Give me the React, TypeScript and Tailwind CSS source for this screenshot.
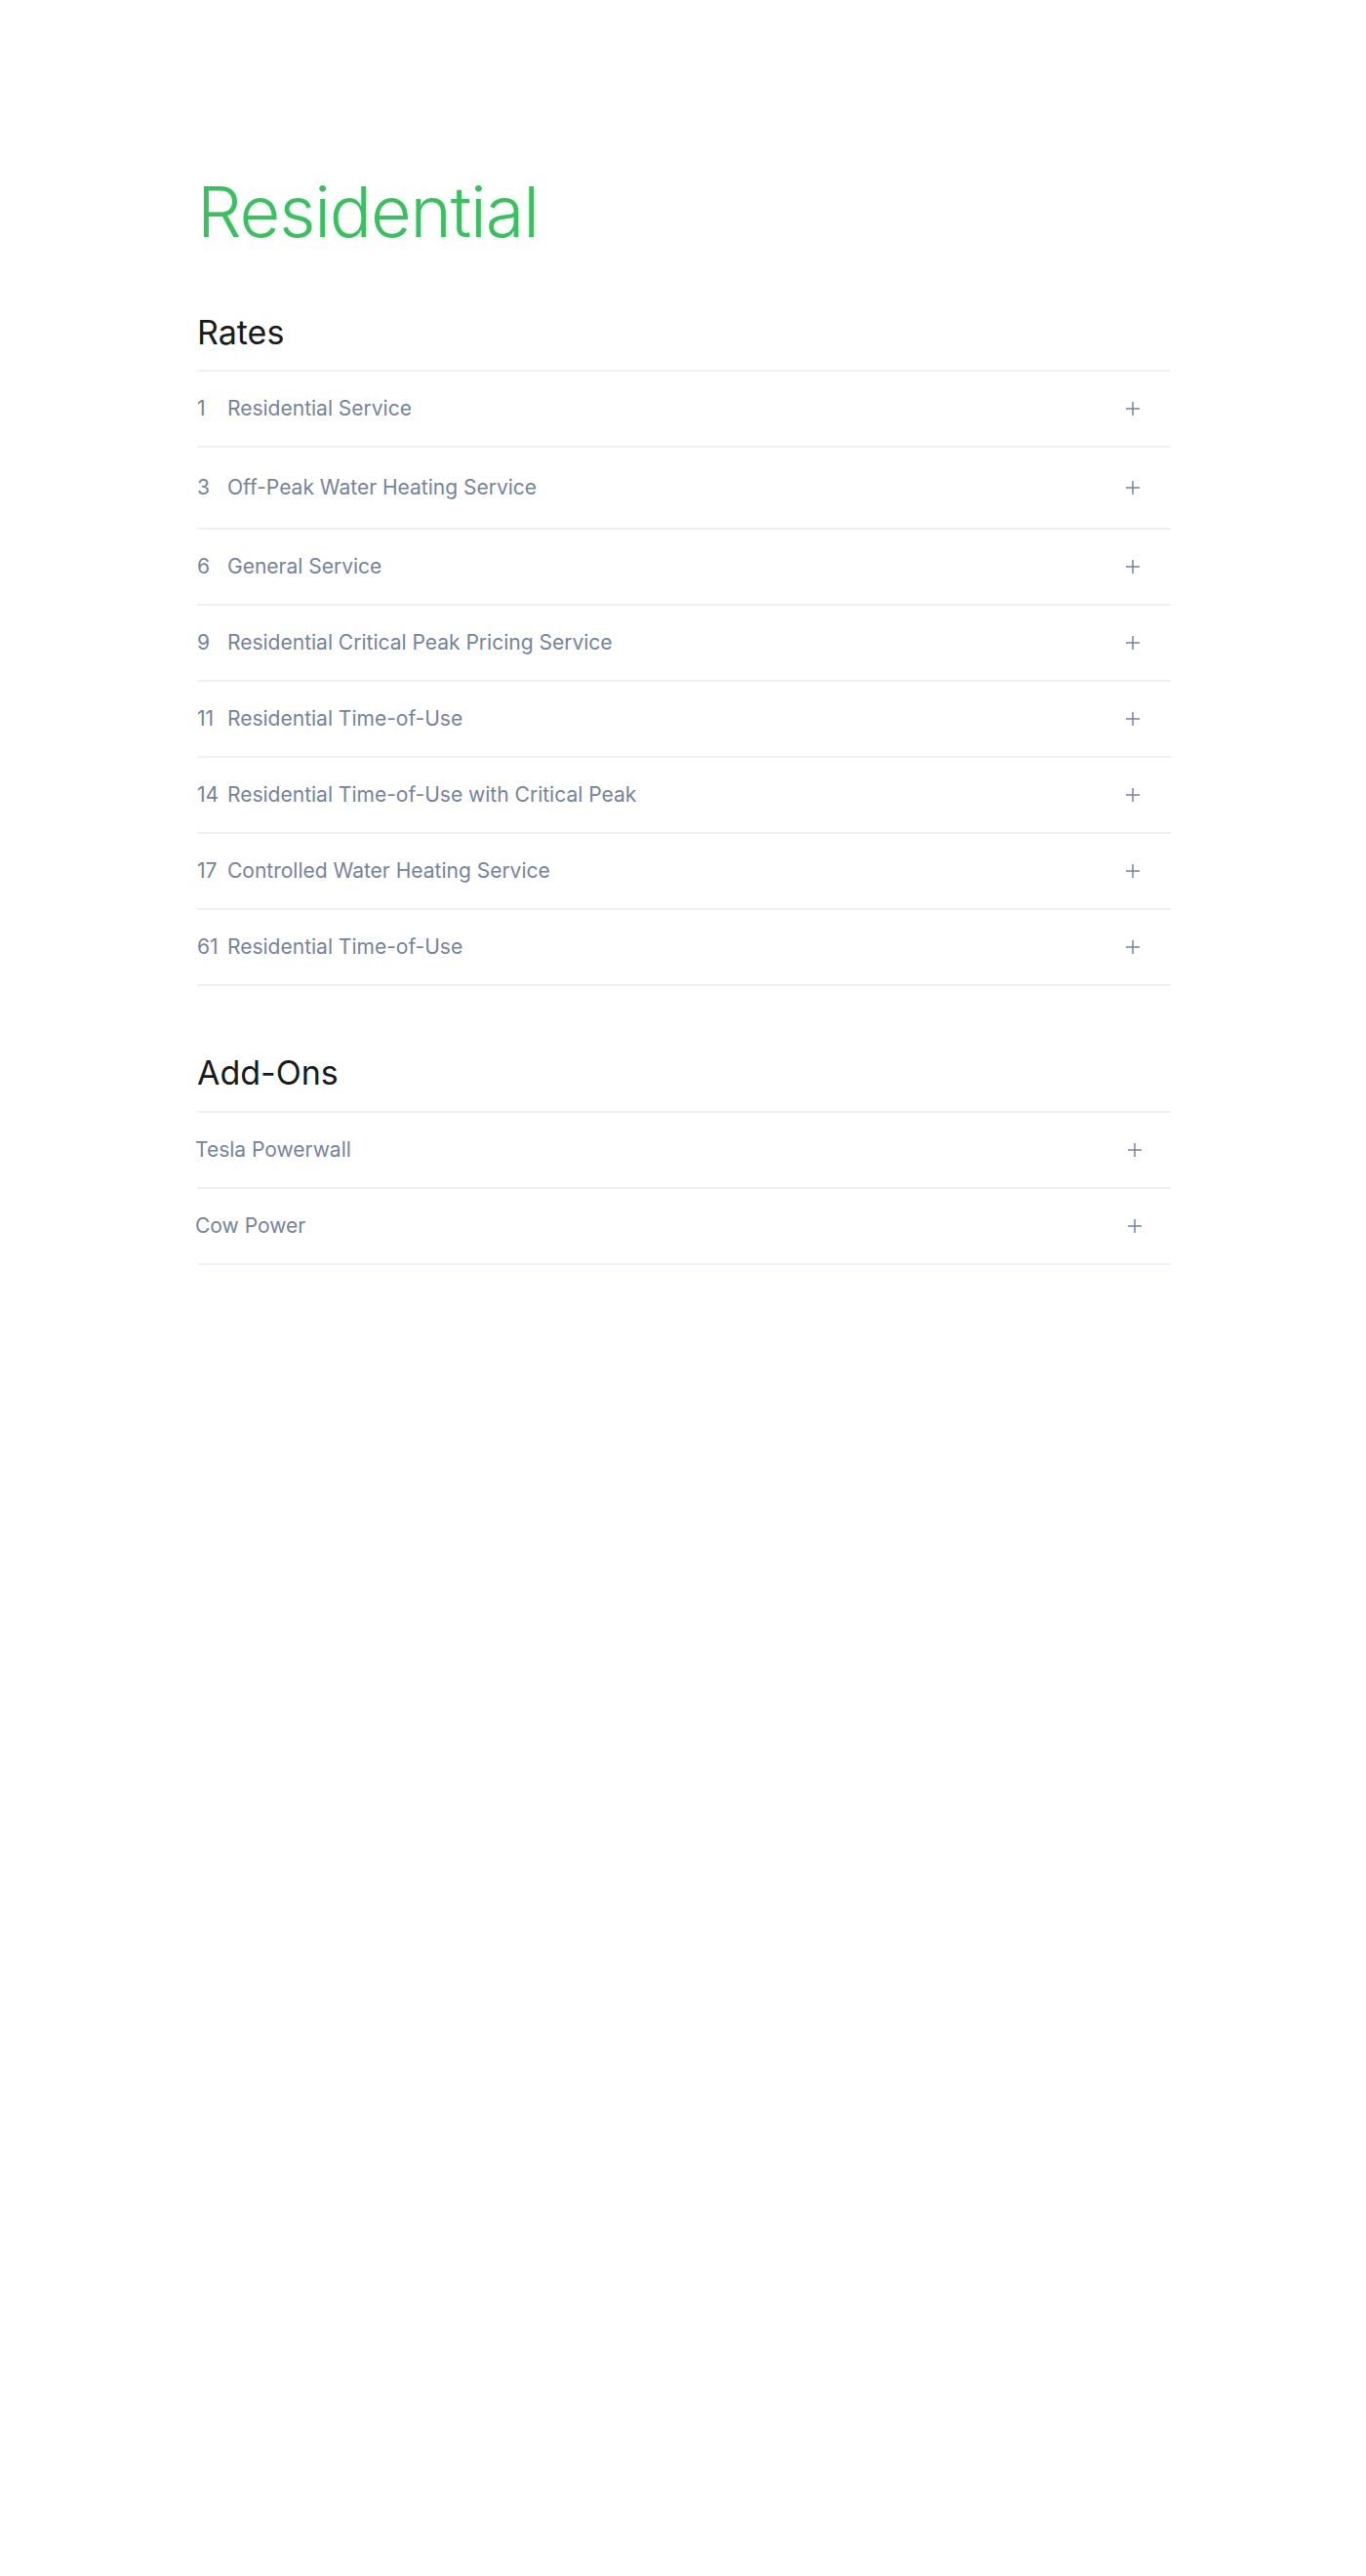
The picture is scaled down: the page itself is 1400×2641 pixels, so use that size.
import React from 'react';

type Rate = { code: string; name: string; tall?: boolean };

const RATES: Rate[] = [
  { code: '1', name: 'Residential Service' },
  { code: '3', name: 'Off-Peak Water Heating Service', tall: true },
  { code: '6', name: 'General Service' },
  { code: '9', name: 'Residential Critical Peak Pricing Service' },
  { code: '11', name: 'Residential Time-of-Use' },
  { code: '14', name: 'Residential Time-of-Use with Critical Peak' },
  { code: '17', name: 'Controlled Water Heating Service' },
  { code: '61', name: 'Residential Time-of-Use' },
];

const ADD_ONS = ['Tesla Powerwall', 'Cow Power'];

function PlusIcon() {
  return (
    <svg width="16" height="16" viewBox="0 0 16 16" fill="none" className="text-[#75839d]">
      <path d="M8 1v14M1 8h14" stroke="currentColor" strokeWidth="1.5" />
    </svg>
  );
}

function Row({ code, label, tall }: { code?: string; label: string; tall?: boolean }) {
  const isAddOn = code === undefined;
  return (
    <button
      type="button"
      className={`w-full flex items-center justify-between border-b-2 border-[#edf1f6] text-left ${
        tall ? 'h-[84px]' : 'h-[78px]'
      }`}
    >
      <span className={`flex items-center text-[21px] text-[#75839d] ${isAddOn ? '-ml-[2px]' : ''}`}>
        {!isAddOn && <span className="w-[31px] shrink-0">{code}</span>}
        <span>{label}</span>
      </span>
      <span className={`flex items-center ${isAddOn ? 'mr-[29px]' : 'mr-[31px]'}`}>
        <PlusIcon />
      </span>
    </button>
  );
}

export default function App() {
  return (
    <div className="min-h-screen bg-white font-['Inter','Liberation_Sans',sans-serif]">
      <div className="w-[998px] ml-[202px] pt-[181px]">
        <h1 className="text-[72px] leading-none font-light tracking-[-0.016em] text-[#38c25e]">Residential</h1>

        {/* Rates */}
        <section className="mt-[71px]">
          <h2 className="text-[34px] leading-none text-[#1a1a1a] pb-[21px] border-b-2 border-[#edf1f6]">Rates</h2>
          {RATES.map((r, i) => (
            <Row key={i} code={r.code} label={r.name} tall={r.tall} />
          ))}
        </section>

        {/* Add-ons */}
        <section className="mt-[72px]">
          <h2 className="text-[34px] leading-none text-[#1a1a1a] pb-[22px] border-b-2 border-[#edf1f6]">Add-Ons</h2>
          {ADD_ONS.map((a) => (
            <Row key={a} label={a} />
          ))}
        </section>
      </div>
    </div>
  );
}
